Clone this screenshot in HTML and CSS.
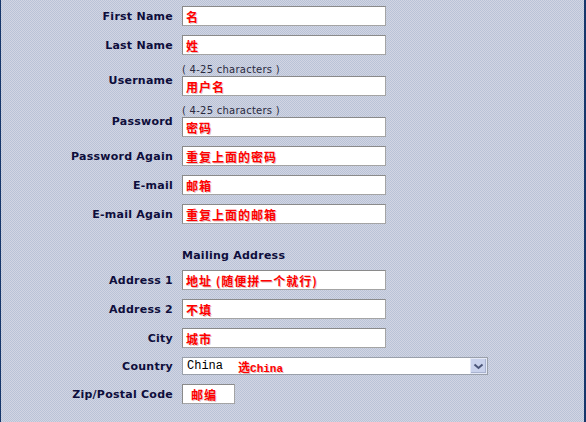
FILE: index.html
```html
<!DOCTYPE html>
<html lang="zh">
<head>
<meta charset="utf-8">
<title>Register</title>
<link rel="stylesheet" href="styles.css">
</head>
<body>
<div class="page">
  <form class="form">
    <label class="lbl">First Name</label>
    <div class="field"><input class="txt" value="名"></div>

    <label class="lbl">Last Name</label>
    <div class="field"><input class="txt" value="姓"></div>

    <label class="lbl">Username</label>
    <div class="field"><div class="hint">( 4-25 characters )</div><input class="txt" value="用户名"></div>

    <label class="lbl">Password</label>
    <div class="field"><div class="hint">( 4-25 characters )</div><input class="txt" value="密码"></div>

    <label class="lbl">Password Again</label>
    <div class="field"><input class="txt" value="重复上面的密码"></div>

    <label class="lbl">E-mail</label>
    <div class="field"><input class="txt" value="邮箱"></div>

    <label class="lbl">E-mail Again</label>
    <div class="field"><input class="txt" value="重复上面的邮箱"></div>

    <div class="lbl"></div>
    <div class="heading">Mailing Address</div>

    <label class="lbl">Address 1</label>
    <div class="field"><input class="txt" value="地址 (随便拼一个就行)"></div>

    <label class="lbl">Address 2</label>
    <div class="field"><input class="txt" value="不填"></div>

    <label class="lbl">City</label>
    <div class="field"><input class="txt" value="城市"></div>

    <label class="lbl">Country</label>
    <div class="field">
      <div class="select">
        <span class="sel-value">China</span>
        <span class="note">选<span class="note-latin">China</span></span>
        <span class="sel-btn">
          <svg width="11" height="7" viewBox="0 0 11 7"><path d="M1.5 1.5 L5.5 5 L9.5 1.5" fill="none" stroke="#4a5578" stroke-width="2"/></svg>
        </span>
      </div>
    </div>

    <label class="lbl">Zip/Postal Code</label>
    <div class="field"><input class="txt zip" value="邮编"></div>
  </form>
</div>
</body>
</html>
```

FILE: styles.css
```css
html, body {
  margin: 0;
  padding: 0;
}

.page {
  box-sizing: border-box;
  width: 586px;
  height: 422px;
  border-left: 1px solid #16366a;
  border-right: 2px solid #16366a;
  background-color: #c6ccdc;
  background-image: repeating-conic-gradient(#b9c3d7 0 25%, #d2d5e3 0 50%);
  background-size: 2px 2px;
  overflow: hidden;
}

.form {
  display: grid;
  grid-template-columns: 172px 1fr;
  column-gap: 9px;
  row-gap: 9px;
  align-items: center;
  padding-top: 6px;
  margin: 0;
}

.lbl {
  box-sizing: border-box;
  padding-top: 2px;
  font-family: "DejaVu Sans", Verdana, sans-serif;
  font-weight: bold;
  font-size: 11px;
  line-height: 14px;
  letter-spacing: 0.25px;
  color: #0e0e3c;
  text-align: right;
}

.field {
  display: flex;
  flex-direction: column;
  align-items: flex-start;
}

.hint {
  font-family: "DejaVu Sans", Verdana, sans-serif;
  font-size: 10px;
  line-height: 12px;
  letter-spacing: 0.25px;
  color: #2a2a40;
}

.txt {
  box-sizing: border-box;
  width: 204px;
  height: 20px;
  margin: 0;
  padding: 0 0 0 3px;
  border: 1px solid #a4a4a4;
  border-top-color: #8a8a8a;
  border-left-color: #8a8a8a;
  background: #fff;
  font-family: "Noto Sans CJK SC", "Liberation Sans", sans-serif;
  font-weight: bold;
  font-size: 12px;
  letter-spacing: 1px;
  color: #ff0000;
  text-shadow: 1px 1px 0 rgba(120, 0, 0, 0.25);
  outline: none;
}

.zip {
  width: 53px;
  padding-left: 8px;
}

.heading {
  box-sizing: border-box;
  height: 28px;
  padding-top: 16px;
  font-family: "DejaVu Sans", Verdana, sans-serif;
  font-weight: bold;
  font-size: 11px;
  line-height: 14px;
  letter-spacing: 0.25px;
  color: #0e0e3c;
}

.select {
  box-sizing: border-box;
  width: 306px;
  height: 18px;
  display: flex;
  align-items: center;
  border: 1px solid #9aa0aa;
  background: #fff;
}

.sel-value {
  font-family: "Liberation Mono", "Courier New", monospace;
  font-size: 12px;
  color: #000;
  padding-left: 4px;
}

.note {
  margin-left: 15px;
  font-family: "Noto Sans CJK SC", sans-serif;
  font-weight: bold;
  font-size: 12px;
  color: #ff0000;
  text-shadow: 1px 1px 0 rgba(120, 0, 0, 0.25);
}

.note-latin {
  font-family: "Liberation Mono", "Courier New", monospace;
  font-size: 11px;
  letter-spacing: 0;
}

.sel-btn {
  margin-left: auto;
  box-sizing: border-box;
  width: 17px;
  height: 16px;
  display: flex;
  align-items: center;
  justify-content: center;
  background: #c9d2ec;
  border: 1px solid #e4e9f6;
  box-shadow: inset -1px -1px 0 #a9b3cf;
}
```
